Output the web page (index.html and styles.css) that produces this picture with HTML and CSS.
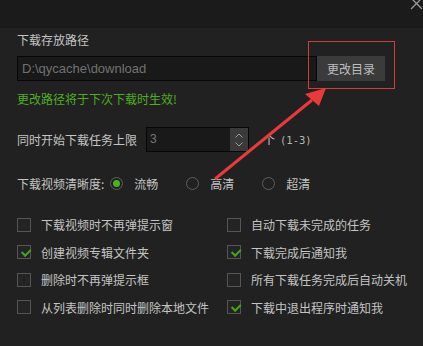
FILE: index.html
```html
<!DOCTYPE html>
<html lang="zh-CN">
<head>
  <meta charset="UTF-8" />
  <title>下载设置</title>
  <link rel="stylesheet" href="styles.css">
</head>
<body>
  <div class="titlebar">
    <svg class="close" width="12" height="12" viewBox="0 0 12 12">
      <path d="M1 -2 L12 9 M12 -2 L1 9" stroke="#9a9a9a" stroke-width="1.3" fill="none"/>
    </svg>
  </div>
  <div class="panel">
    <div class="label">下载存放路径</div>
    <div class="path-row">
      <div class="path-input">D:\qycache\download</div>
      <div class="btn">更改目录</div>
    </div>
    <div class="hint">更改路径将于下次下载时生效!</div>

    <div class="spin-row">
      <span>同时开始下载任务上限</span>
      <div class="spin">
        <span class="spin-val">3</span>
        <div class="spin-arrows">
          <svg width="10" height="16" viewBox="0 0 10 16">
            <path d="M1.5 5.5 L5 2 L8.5 5.5 M1.5 10.5 L5 14 L8.5 10.5" stroke="#9a9a9a" stroke-width="1" fill="none"/>
          </svg>
        </div>
      </div>
      <span class="unit">个</span>
      <span class="range">(1-3)</span>
    </div>

    <div class="radio-row">
      <span>下载视频清晰度:</span>
      <label class="radio on"><i></i>流畅</label>
      <label class="radio"><i></i>高清</label>
      <label class="radio"><i></i>超清</label>
    </div>

    <div class="checks">
      <label class="check"><i></i>下载视频时不再弹提示窗</label>
      <label class="check"><i></i>自动下载未完成的任务</label>
      <label class="check on"><i></i>创建视频专辑文件夹</label>
      <label class="check on"><i></i>下载完成后通知我</label>
      <label class="check"><i></i>删除时不再弹提示框</label>
      <label class="check"><i></i>所有下载任务完成后自动关机</label>
      <label class="check"><i></i>从列表删除时同时删除本地文件</label>
      <label class="check on"><i></i>下载中退出程序时通知我</label>
    </div>
  </div>

  <!-- 标注 -->
  <div class="mark-box"></div>
  <svg class="mark-arrow" width="423" height="346" viewBox="0 0 423 346">
    <path d="M215 179 L312 100" stroke="#e83a3a" stroke-width="3" fill="none"/>
    <path d="M326 88 L305 94 L319 106 Z" fill="#e83a3a"/>
  </svg>
</body>
</html>
```

FILE: styles.css
```css
* { box-sizing: border-box; margin: 0; padding: 0; }
body {
  font-family: "Noto Sans CJK SC", "Noto Sans", sans-serif;
  font-size: 12px;
  color: #c4c4c4;
  background: #212121;
  width: 423px;
  height: 346px;
  overflow: hidden;
  position: relative;
}
.titlebar {
  height: 28px;
  background: #1b1b1b;
  display: flex;
  justify-content: flex-end;
  padding-right: 1px;
}
.close { display: block; }
.panel { padding: 3px 0 0 17px; }
.label { line-height: 17px; }
.path-row {
  display: flex;
  margin-top: 8px;
  height: 25px;
}
.path-input {
  width: 300px;
  background: #191919;
  border: 1px solid #070707;
  color: #727272;
  padding-left: 4px;
  line-height: 23px;
  font-family: "Liberation Sans", sans-serif;
  font-size: 13px;
}
.btn {
  width: 68px;
  background: #3a3b3a;
  color: #bdbdbd;
  text-align: center;
  line-height: 25px;
}
.hint {
  color: #4fae20;
  margin-top: 9px;
  line-height: 17px;
}
.spin-row {
  display: flex;
  align-items: center;
  margin-top: 20px;
  height: 25px;
}
.spin {
  display: flex;
  margin-left: 9px;
  width: 103px;
  height: 25px;
  border: 1px solid #060606;
  background: #191919;
}
.spin-val {
  flex: 1;
  color: #777;
  padding-left: 3px;
  line-height: 23px;
  font-family: "Liberation Sans", sans-serif;
}
.spin-arrows {
  width: 18px;
  background: #3a3a3a;
  display: flex;
  align-items: center;
  justify-content: center;
}
.unit { margin-left: 14px; }
.range {
  margin-left: 5px;
  font-family: "DejaVu Sans Mono", monospace;
  font-size: 10.5px;
  color: #b5b5b5;
}
.radio-row {
  display: flex;
  align-items: center;
  margin-top: 19px;
  height: 25px;
}
.radio {
  display: flex;
  align-items: center;
  margin-left: 6px;
  width: 69px;
}
.radio + .radio { margin-left: 7px; }
.radio i {
  width: 13px;
  height: 13px;
  border: 1.5px solid #5e5e5e;
  border-radius: 50%;
  margin-right: 11px;
  display: flex;
  align-items: center;
  justify-content: center;
}
.radio.on i::after {
  content: "";
  width: 7px;
  height: 7px;
  border-radius: 50%;
  background: #4db31b;
}
.checks {
  display: grid;
  grid-template-columns: 210px 190px;
  grid-auto-rows: 27.5px;
  margin-top: 15px;
}
.check {
  display: flex;
  align-items: center;
}
.check i {
  width: 14px;
  height: 14px;
  border: 1px solid #555;
  background: #242424;
  margin-right: 10px;
  position: relative;
}
.check.on i::after {
  content: "";
  position: absolute;
  left: 3px;
  top: 2px;
  width: 7px;
  height: 4px;
  border-left: 2px solid #3fa61a;
  border-bottom: 2px solid #3fa61a;
  transform: rotate(-45deg) translate(0, 1px);
}
.mark-box {
  position: absolute;
  left: 308px;
  top: 41px;
  width: 87px;
  height: 48px;
  border: 1px solid #d63c3c;
}
.mark-arrow {
  position: absolute;
  left: 0;
  top: 0;
  pointer-events: none;
}
```
